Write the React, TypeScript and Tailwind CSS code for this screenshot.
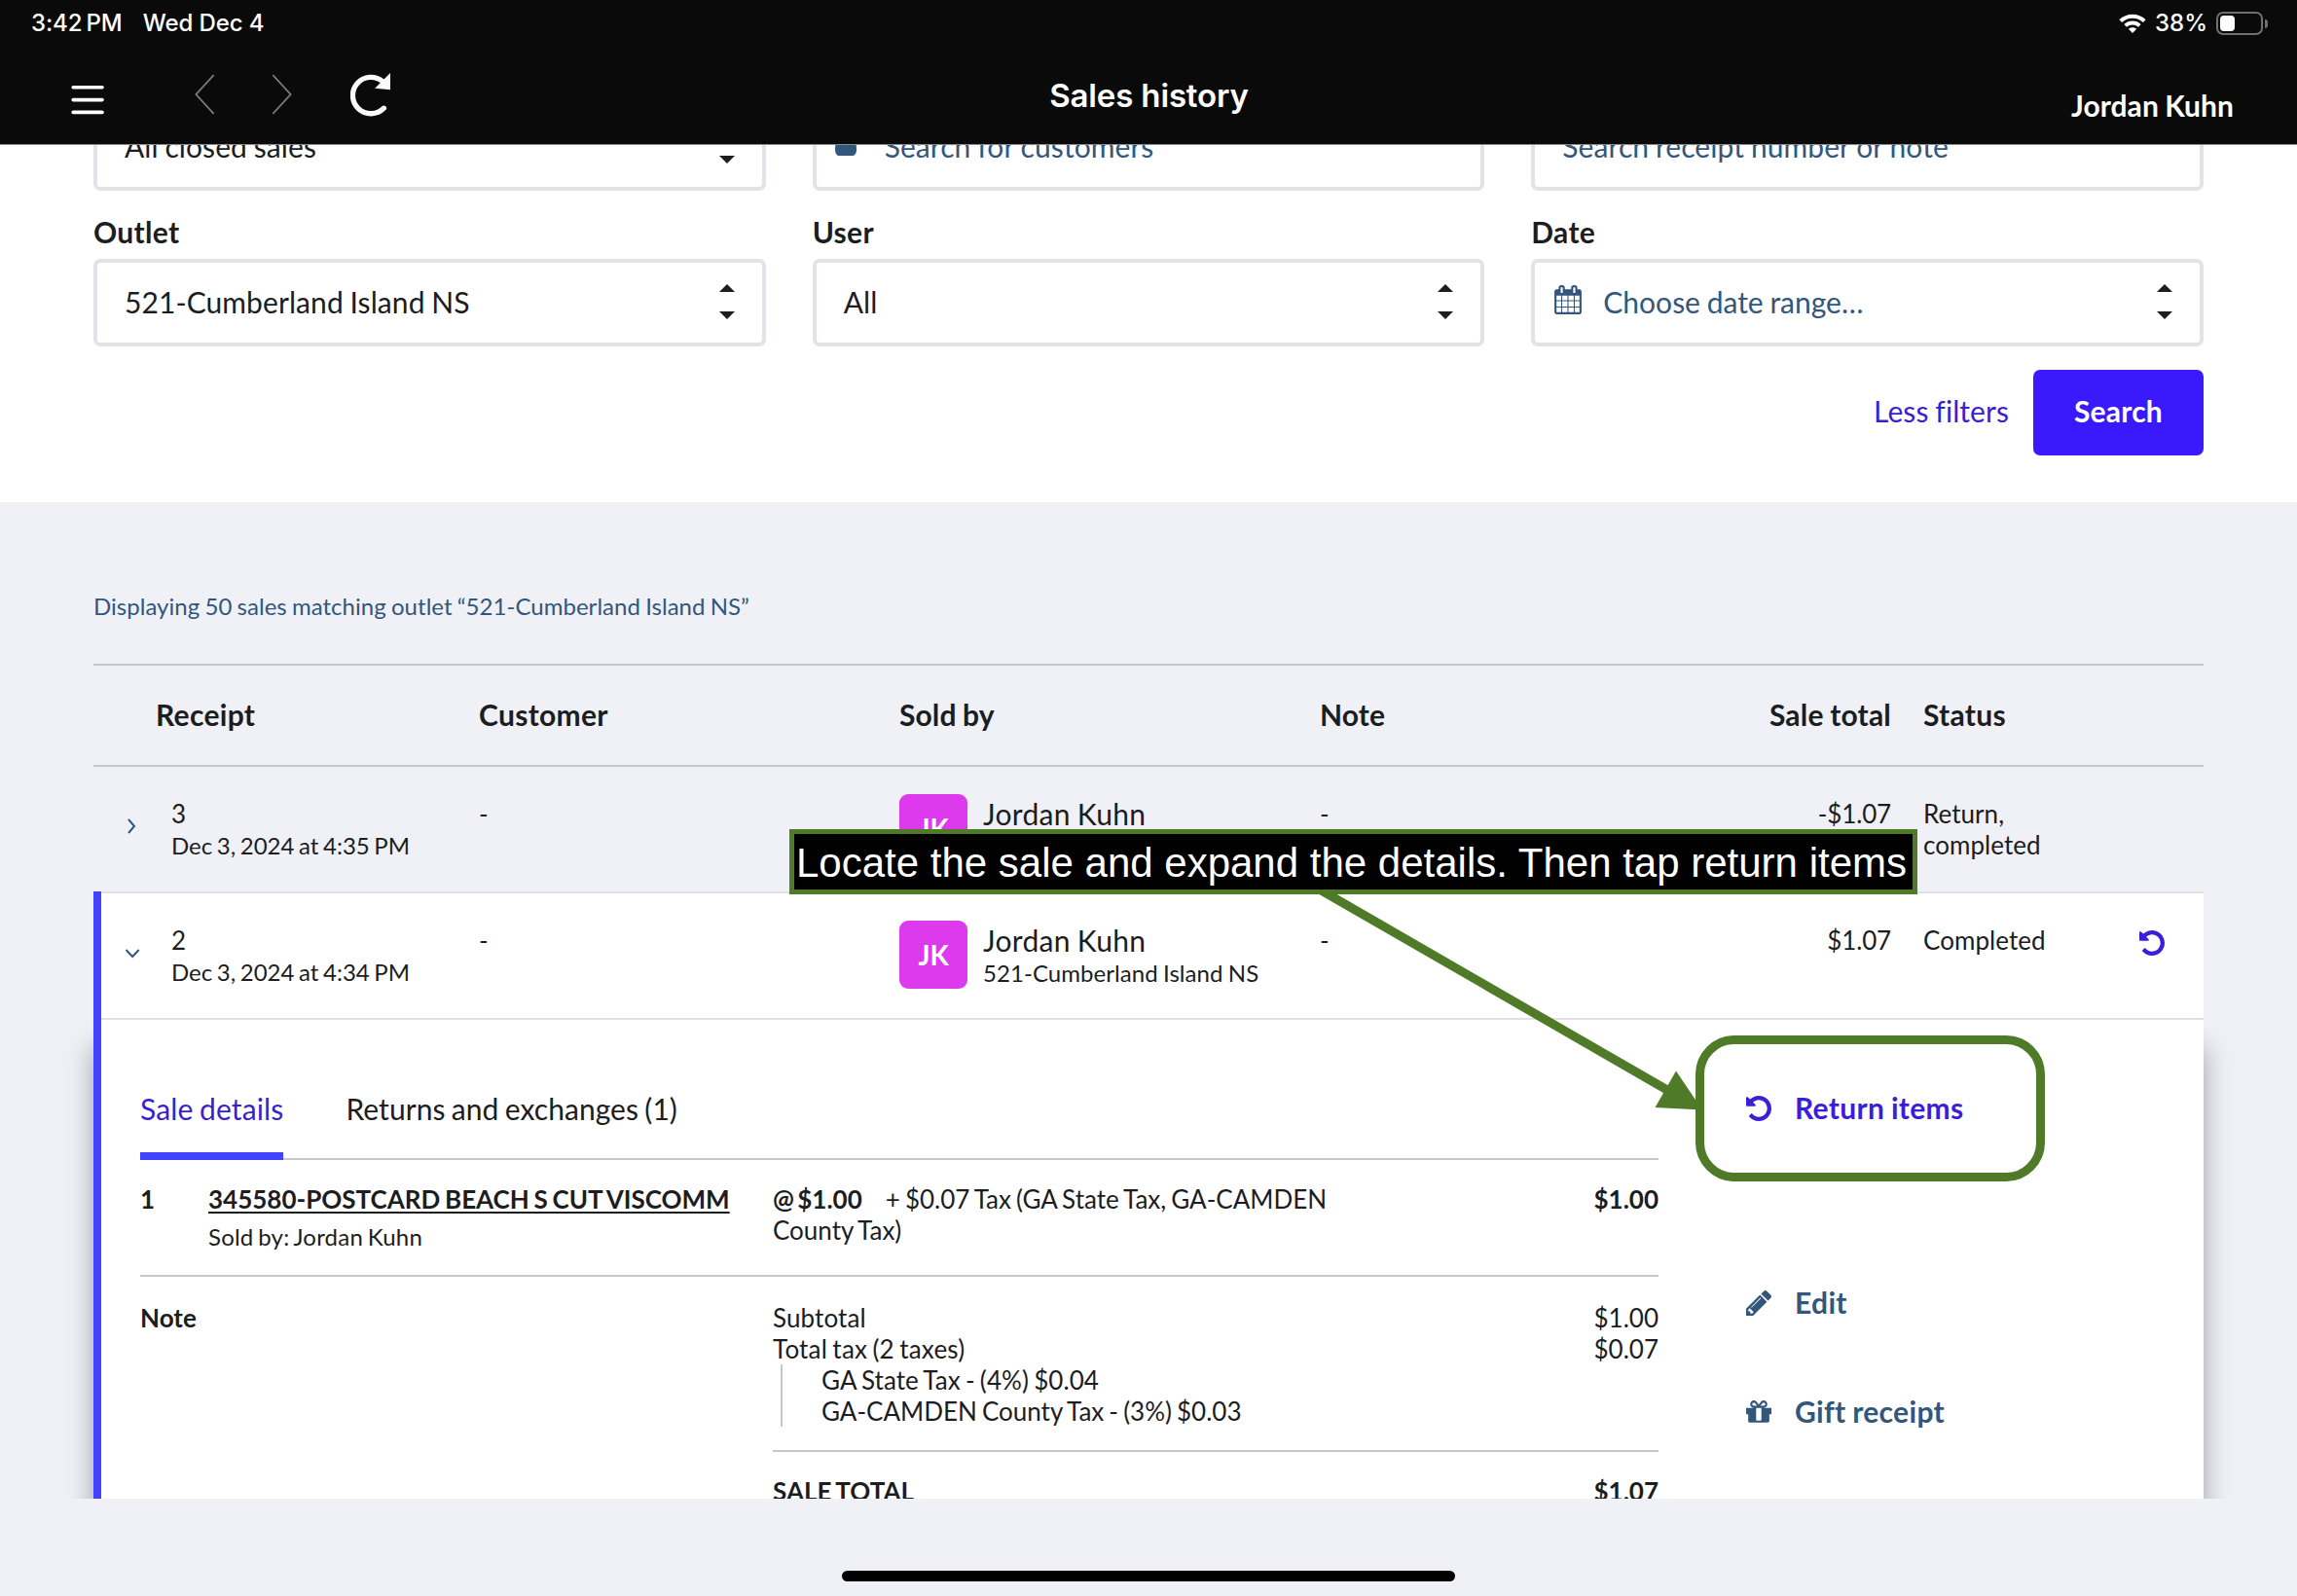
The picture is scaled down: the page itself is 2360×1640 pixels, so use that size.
import React from "react";

type IconProps = { className?: string };

const UndoIcon = ({ className }: IconProps) => (
  <svg viewBox="128 128 1536 1536" className={className} fill="currentColor">
    <path d="M1664 896q0 156-61 298t-164 245-245 164-298 61q-172 0-327-72.5t-264-204.5q-7-10-6.5-22.5t8.5-20.5l137-138q10-9 25-9 16 2 23 12 73 95 179 147t225 52q104 0 198.5-40.5t163.5-109.5 109.5-163.5 40.5-198.5-40.5-198.5-109.5-163.5-163.5-109.5-198.5-40.5q-98 0-188 35.5t-160 101.5l137 138q31 30 14 69-17 40-59 40h-448q-26 0-45-19t-19-45v-448q0-42 40-59 39-17 69 14l130 129q107-101 244.5-156.5t284.5-55.5q156 0 298 61t245 164 164 245 61 298z" />
  </svg>
);

const PencilIcon = ({ className }: IconProps) => (
  <svg viewBox="128 149 1515 1515" className={className} fill="currentColor">
    <path d="M491 1536l91-91-235-235-91 91v107h128v128h107zm523-928q0-22-22-22-10 0-17 7l-542 542q-7 7-7 17 0 22 22 22 10 0 17-7l542-542q7-7 7-17zm-54-192l416 416-832 832h-416v-416zm683 96q0 53-37 90l-166 166-416-416 166-165q36-38 90-38 53 0 91 38l235 234q37 39 37 91z" />
  </svg>
);

const GiftIcon = ({ className }: IconProps) => (
  <svg viewBox="128 128 1536 1536" className={className} fill="currentColor">
    <path d="M1056 1356v-716h-320v716q0 25 18 38.5t46 13.5h192q28 0 46-13.5t18-38.5zm-456-844h195l-126-161q-26-31-69-31-40 0-68 28t-28 68 28 68 68 28zm688-96q0-40-28-68t-68-28q-43 0-69 31l-125 161h194q40 0 68-28t28-68zm376 256v320q0 14-9 23t-23 9h-96v416q0 40-28 68t-68 28h-1088q-40 0-68-28t-28-68v-416h-96q-14 0-23-9t-9-23v-320q0-14 9-23t23-9h440q-93 0-158.5-65.5t-65.5-158.5 65.5-158.5 158.5-65.5q107 0 168 77l128 165 128-165q61-77 168-77 93 0 158.5 65.5t65.5 158.5-65.5 158.5-158.5 65.5h440q14 0 23 9t9 23z" />
  </svg>
);

const CalendarIcon = ({ className }: IconProps) => (
  <svg viewBox="64 0 1664 1792" className={className} fill="currentColor">
    <path d="M192 1664h288v-288h-288v288zm352 0h320v-288h-320v288zm-352-352h288v-320h-288v320zm352 0h320v-320h-320v320zm-352-384h288v-288h-288v288zm736 736h320v-288h-320v288zm-384-736h320v-288h-320v288zm768 736h288v-288h-288v288zm-384-352h320v-320h-320v320zm-352-864v-288q0-13-9.5-22.5t-22.5-9.5h-64q-13 0-22.5 9.5t-9.5 22.5v288q0 13 9.5 22.5t22.5 9.5h64q13 0 22.5-9.5t9.5-22.5zm736 864h288v-320h-288v320zm-384-384h320v-288h-320v288zm384 0h288v-288h-288v288zm32-480v-288q0-13-9.5-22.5t-22.5-9.5h-64q-13 0-22.5 9.5t-9.5 22.5v288q0 13 9.5 22.5t22.5 9.5h64q13 0 22.5-9.5t9.5-22.5zm384-64v1280q0 52-38 90t-90 38h-1408q-52 0-90-38t-38-90v-1280q0-52 38-90t90-38h128v-96q0-66 47-113t113-47h64q66 0 113 47t47 113v96h384v-96q0-66 47-113t113-47h64q66 0 113 47t47 113v96h128q52 0 90 38t38 90z" />
  </svg>
);

const UserIcon = ({ className }: IconProps) => (
  <svg viewBox="256 128 1280 1536" preserveAspectRatio="none" className={className} fill="currentColor">
    <path d="M1536 1399q0 109-62.5 187t-150.5 78h-854q-88 0-150.5-78t-62.5-187q0-85 8.5-160.5t31.5-152 58.5-131 94-89 134.5-34.5q131 128 313 128t313-128q76 0 134.5 34.5t94 89 58.5 131 31.5 152 8.5 160.5zm-256-887q0 159-112.5 271.5t-271.5 112.5-271.5-112.5-112.5-271.5 112.5-271.5 271.5-112.5 271.5 112.5 112.5 271.5z" />
  </svg>
);

const SortArrows = () => (
  <svg viewBox="0 0 16 36" className="mb-0.5 h-9 w-4" fill="#1c1d1f">
    <path d="M8 0l8 8H0zM8 36l8-8H0z" />
  </svg>
);

const StatusBar = () => (
  <div className="flex h-12 items-center justify-between pr-[30px] pl-8 font-['Inter'] text-[24px] font-medium [word-spacing:0] text-white">
    <div className="flex gap-[21px] tracking-[-0.1px]">
      <span>3:42&#8239;PM</span>
      <span>Wed Dec 4</span>
    </div>
    <div className="flex items-center">
      <svg viewBox="0 0 28 20" className="mr-[9px] h-5 w-7" fill="none" stroke="white">
        <path d="M1.8 7.6C8.6 1 19.4 1 26.2 7.6" strokeWidth="4" />
        <path d="M6.7 12.4c4.1-3.9 10.5-3.9 14.6 0" strokeWidth="3.8" />
        <path d="M14 20l-4.2-4.3c2.4-2.1 6-2.1 8.4 0z" fill="white" stroke="none" />
      </svg>
      <span className="mr-[9px]">38%</span>
      <div className="flex h-6 w-12 rounded-[7px] border-2 border-[#707070] p-[2px]">
        <div className="w-[15px] rounded-[4px] bg-white" />
      </div>
      <div className="ml-[2px] h-[9px] w-[3px] rounded-r-full bg-[#707070]" />
    </div>
  </div>
);

const Header = () => (
  <header className="relative z-10 h-[149px] border-b border-[#8a8a8a] bg-[#0a0a0a] text-white">
    <StatusBar />
    <div className="grid h-[99px] grid-cols-[1fr_auto_1fr]">
      <div className="flex pl-[73px]">
        <svg viewBox="0 0 34 30" className="mt-10 h-[30px] w-[34px]" fill="white">
          <rect x="0.4" y="0" width="33.4" height="3.6" rx="1.8" />
          <rect x="0.4" y="12.8" width="33.4" height="3.6" rx="1.8" />
          <rect x="0.4" y="25.6" width="33.4" height="3.6" rx="1.8" />
        </svg>
        <svg viewBox="0 0 20 42" className="mt-7 ml-[93px] h-[42px] w-5" fill="none" stroke="#7d7d7d" strokeWidth="1.8">
          <path d="M19.7 1L1.4 21l18.3 20" />
        </svg>
        <svg viewBox="0 0 20 42" className="mt-7 ml-[60px] h-[42px] w-5" fill="none" stroke="#7d7d7d" strokeWidth="1.8">
          <path d="M.3 1l18.3 20L.3 41" />
        </svg>
        <svg viewBox="0 0 42 48" className="mt-6 ml-[59.5px] h-12 w-[42px]" fill="none" stroke="#fafafa" strokeWidth="5.3" strokeLinecap="round">
          <path d="M34.4 39.2A18.7 18.7 0 1 1 33 11.6" />
          <path d="M41 3v17.3l-15.8-1.6z" fill="#fafafa" stroke="none" />
        </svg>
      </div>
      <h1 className="mt-7 pl-px font-['Inter'] text-[33px] leading-[44px] font-semibold tracking-[-0.15px] [word-spacing:0]">Sales history</h1>
      <div className="mt-[42px] pr-[65px] text-right text-[30px] leading-9 font-bold tracking-[0.05px]">Jordan Kuhn</div>
    </div>
  </header>
);

const field =
  "flex h-[90px] items-center rounded-[7px] border-4 border-[#e2e3e8] bg-white text-[30px] leading-[34px] tracking-[0.08px] [&>span]:mb-[2px]";
const label = "mt-6 mb-[10px] h-9 text-[30px] leading-9 font-bold tracking-[0.3px]";

const Filters = () => (
  <section className="flow-root h-[368px] bg-white px-24">
    <div className="-mt-[42px] grid grid-cols-3 gap-x-12">
      <div className={field + " justify-between px-7"}>
        <span>All closed sales</span>
        <SortArrows />
      </div>
      <div className={field + " pl-[19px] text-[#33567d]"}>
        <UserIcon className="mb-4 h-[34px] w-[22px]" />
        <span className="ml-[29px]">Search for customers</span>
      </div>
      <div className={field + " pl-7 text-[#33567d]"}>
        <span>Search receipt number or note</span>
      </div>
      <div>
        <div className={label}>Outlet</div>
        <div className={field + " justify-between px-7"}>
          <span>521-Cumberland Island NS</span>
          <SortArrows />
        </div>
      </div>
      <div>
        <div className={label}>User</div>
        <div className={field + " justify-between px-7"}>
          <span>All</span>
          <SortArrows />
        </div>
      </div>
      <div>
        <div className={label}>Date</div>
        <div className={field + " pr-7 pl-5 text-[#33567d]"}>
          <CalendarIcon className="mb-1.5 h-[30px] w-7" />
          <span className="mr-auto ml-[22px] tracking-normal">Choose date range…</span>
          <SortArrows />
        </div>
      </div>
    </div>
    <div className="mt-6 flex items-center justify-end gap-[25px] text-[30px]">
      <span className="mb-1 leading-9 tracking-[0.08px] text-[#3a1fd0]">Less filters</span>
      <button className="h-[88px] w-[175px] rounded-[7px] bg-[#3a19fd] pb-[3px] font-bold tracking-[0.2px] text-white">Search</button>
    </div>
  </section>
);

const cols = "grid grid-cols-[64px_332px_432px_432px_587px_1fr]";

const Chevron = ({ open }: { open?: boolean }) => (
  <svg viewBox="0 0 16 16" className="mt-[53px] ml-8 h-4 w-4" fill="none" stroke="#33567d" strokeWidth="2">
    <path d={open ? "M1.5 5l6.6 7 6.6-7" : "M4 1l6 7-6 7"} />
  </svg>
);

type Sale = { id: string; when: string; total: string; status: React.ReactNode; open?: boolean };

const SaleRow = ({ id, when, total, status, open }: Sale) => (
  <div className={cols + " relative h-[130px] border-b-2 border-[#e0e1e5] text-[26px] leading-8 " + (open ? "bg-white" : "")}>
    {open && <div className="absolute -top-[2px] left-0 h-[132px] w-2 bg-[#4343ff]" />}
    <Chevron open={open} />
    <div className="pt-8 pl-4">
      <div>{id}</div>
      <div className="pt-px text-[24px] [word-spacing:-1.56px]">{when}</div>
    </div>
    <div className="pt-8">-</div>
    <div className="flex pt-7">
      <div className="mr-4 flex h-[70px] w-[70px] items-center justify-center rounded-[9px] bg-[#dc3aec] pb-px text-[28px] font-bold text-white">JK</div>
      <div className="pt-[2px]">
        <div className="text-[30px] leading-9 tracking-[0.3px]">Jordan Kuhn</div>
        <div className="text-[24px] tracking-[0.06px]">521-Cumberland Island NS</div>
      </div>
    </div>
    <div className="pt-8">-</div>
    <div className="flex pt-8">
      <div className="ml-[33px] flex-1 tracking-[0.05px]">{status}</div>
      {open && <UndoIcon className="mt-[6px] mr-10 h-[26px] w-[26px] text-[#3a1fd8]" />}
    </div>
    <div className="absolute top-8 right-[321px] tracking-[-0.15px]">{total}</div>
  </div>
);

const SaleDetail = () => (
  <div className="flex h-[700px] border-l-8 border-[#4343ff] bg-white pl-10 shadow-[0_28px_26px_rgba(0,0,0,0.34)]">
    <div className="w-[1560px] text-[26px] leading-8 [word-spacing:-1.56px]">
      <div className="flex gap-16 border-b-2 border-[#c7c7ca] pt-[73px] text-[30px] leading-9 [word-spacing:-1.4px]">
        <div className="-mb-[2px] h-[71px] border-b-8 border-[#4343ff] tracking-[0.15px] text-[#3a1fd0]">Sale details</div>
        <div className="tracking-[0.05px]">Returns and exchanges (1)</div>
      </div>
      <div className="grid h-[120px] grid-cols-[70px_580px_1fr_auto] border-b-2 border-[#c7c7ca] pt-6">
        <div className="font-bold">1</div>
        <div>
          <div className="font-bold underline decoration-2 underline-offset-[3px]">345580-POSTCARD BEACH S CUT VISCOMM</div>
          <div className="mt-[7px] text-[24px] tracking-[0.2px]">Sold by: Jordan Kuhn</div>
        </div>
        <div className="max-w-[600px]">
          <span className="mr-6 font-bold [word-spacing:-3px]">@ $1.00</span>+ $0.07 Tax (GA State Tax, GA-CAMDEN County Tax)
        </div>
        <div className="font-bold">$1.00</div>
      </div>
      <div className="grid grid-cols-[650px_1fr]">
        <div className="pt-[26px] font-bold">Note</div>
        <div>
          <div className="border-b-2 border-[#c7c7ca] pt-[26px] pb-6">
            <div className="flex justify-between">
              <span className="tracking-[0.1px]">Subtotal</span>
              <span>$1.00</span>
            </div>
            <div className="flex justify-between">
              <span className="tracking-[0.2px]">Total tax (2 taxes)</span>
              <span>$0.07</span>
            </div>
            <div className="ml-2 border-l-2 border-[#c7c7ca] pl-10">
              <div className="tracking-[0.08px]">GA State Tax - (4%) $0.04</div>
              <div>GA-CAMDEN County Tax - (3%) $0.03</div>
            </div>
          </div>
          <div className="flex justify-between pt-6 font-bold">
            <span>SALE TOTAL</span>
            <span>$1.07</span>
          </div>
        </div>
      </div>
    </div>
    <div className="ml-[90px] flex flex-col pt-[74px] text-[30px] leading-9 font-bold tracking-[0.32px] text-[#33567d]">
      <div className="flex items-center gap-6 text-[#3a1fd8]">
        <UndoIcon className="h-[26px] w-[26px]" />
        <span className="-mt-0.5">Return items</span>
      </div>
      <div className="mt-[166px] flex items-center gap-6">
        <PencilIcon className="h-[26px] w-[26px]" />
        <span className="-mt-0.5">Edit</span>
      </div>
      <div className="mt-[78px] flex items-center gap-6">
        <GiftIcon className="h-[26px] w-[26px]" />
        <span className="-mt-0.5">Gift receipt</span>
      </div>
    </div>
  </div>
);

const SalesTable = () => (
  <section className="px-24">
    <p className="pt-[89px] text-[24px] leading-9 tracking-[0.03px] text-[#33567d]">Displaying 50 sales matching outlet “521-Cumberland Island NS”</p>
    <div className={cols + " relative mt-[41px] h-[106px] items-center border-y-2 border-[#c7c8cd] pb-0.5 text-[30px] font-bold tracking-[0.3px]"}>
      <div />
      <div>Receipt</div>
      <div>Customer</div>
      <div className="tracking-[0.1px]">Sold by</div>
      <div className="tracking-[0.1px]">Note</div>
      <div className="flex">
        <div className="ml-[33px]">Status</div>
      </div>
      <div className="absolute right-[321px] pb-0.5 tracking-[0.2px]">Sale total</div>
    </div>
    <SaleRow id="3" when="Dec 3, 2024 at 4:35 PM" total="-$1.07" status={<>Return,<br />completed</>} />
    <SaleRow id="2" when="Dec 3, 2024 at 4:34 PM" total="$1.07" status="Completed" open />
    <SaleDetail />
  </section>
);

const Annotations = () => (
  <>
    <svg viewBox="1340 900 420 260" className="absolute top-[900px] left-[1340px] h-[260px] w-[420px]" fill="#4f7a28">
      <path d="M1355 913.5L1712 1119.5" stroke="#4f7a28" strokeWidth="9" />
      <path d="M1722 1100.5L1749 1140.5 1700.5 1138z" />
    </svg>
    <div className="absolute top-[1064px] left-[1742px] h-[150px] w-[359px] rounded-[40px] border-[9px] border-[#4f7a28]" />
    <div className="absolute top-[852px] left-[811px] flex h-[67px] w-[1159px] items-center border-[5px] border-[#4f7a28] bg-black pt-0.5 pl-[2px] font-['Liberation_Sans'] text-[42px] leading-[48px] whitespace-nowrap [word-spacing:0] text-white">
      Locate the sale and expand the details. Then tap return items
    </div>
  </>
);

export default function App() {
  return (
    <div className="relative h-[1640px] w-[2360px] overflow-hidden bg-[#f0f1f6] font-['Lato',sans-serif] [word-spacing:-0.96px] text-[#1c1d1f]">
      <Header />
      <main className="-mt-px h-[1392px] overflow-hidden">
        <Filters />
        <SalesTable />
      </main>
      <div className="mx-auto mt-[74px] h-[11px] w-[630px] rounded-full bg-black" />
      <Annotations />
    </div>
  );
}
